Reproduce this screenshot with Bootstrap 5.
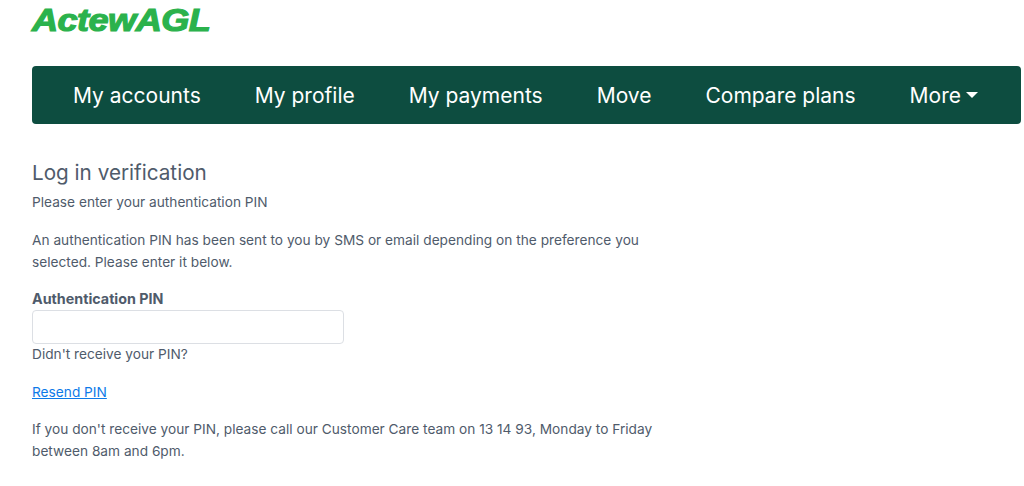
<!DOCTYPE html>
<html lang="en">

<head>
    <meta charset="UTF-8">
    <meta name="viewport" content="width=device-width, initial-scale=1.0">
    <title>ActewAGL</title>
    <link href="https://cdn.jsdelivr.net/npm/bootstrap@5.3.0/dist/css/bootstrap.min.css" rel="stylesheet">
    <style>
        body {
            font-family: Inter, "Noto Sans", sans-serif;
            color: #4f5b6b;
            font-size: 13.7px;
            line-height: 22px;
            background: #fff;
        }

        .page-wrap {
            padding: 0 3px 0 32px;
        }

        .brand-bar {
            height: 66px;
            padding-top: 1px;
        }

        .brand-logo {
            display: inline-block;
            font-family: "Liberation Sans", sans-serif;
            font-size: 32px;
            line-height: 38px;
            font-weight: 700;
            font-style: italic;
            color: #2bb24c;
            letter-spacing: -0.5px;
            -webkit-text-stroke: 1.2px #2bb24c;
            transform: scaleX(1.13);
            transform-origin: left top;
        }

        .main-nav {
            background: #0d4d40;
            height: 58px;
            padding: 0 0 0 14px;
            border-radius: 4px;
        }

        .main-nav .nav-link {
            color: #fff;
            font-size: 21px;
            line-height: 30px;
            padding: 15px 27px 13px;
        }

        .page-title {
            font-size: 20.7px;
            line-height: 28px;
            font-weight: 400;
            color: #4f5b6b;
            margin: 35px 0 4px;
        }

        .text-col {
            width: 640px;
        }

        .text-col p {
            margin-bottom: 16px;
        }

        .text-col p.tight-gap {
            margin-bottom: 15px;
        }

        .pin-label {
            font-size: 14.3px;
            font-weight: 700;
            margin-bottom: 0;
            display: block;
        }

        .pin-input {
            width: 312px;
            height: 34px;
            min-height: 34px;
            border: 1px solid #dcdfe4;
            border-radius: 4px;
        }

        .pin-help {
            margin-top: -1px;
        }

        .resend-link {
            color: #0d7ae8;
        }
    </style>
</head>

<body>
    <div class="page-wrap">
        <div class="brand-bar"><span class="brand-logo">ActewAGL</span></div>

        <ul class="nav main-nav align-items-center">
            <li class="nav-item"><a class="nav-link" href="#">My accounts</a></li>
            <li class="nav-item"><a class="nav-link" href="#">My profile</a></li>
            <li class="nav-item"><a class="nav-link" href="#">My payments</a></li>
            <li class="nav-item"><a class="nav-link" href="#">Move</a></li>
            <li class="nav-item"><a class="nav-link" href="#">Compare plans</a></li>
            <li class="nav-item"><a class="nav-link dropdown-toggle" href="#">More</a></li>
        </ul>

        <h1 class="page-title">Log in verification</h1>
        <div class="text-col">
            <p>Please enter your authentication PIN</p>
            <p class="tight-gap">An authentication PIN has been sent to you by SMS or email depending on the preference you selected. Please enter it below.</p>
            <label class="pin-label" for="pin">Authentication PIN</label>
            <input class="form-control pin-input" id="pin" type="text">
            <p class="pin-help">Didn't receive your PIN?</p>
            <p class="tight-gap"><a class="resend-link" href="#">Resend PIN</a></p>
            <p>If you don't receive your PIN, please call our Customer Care team on 13 14 93, Monday to Friday between 8am and 6pm.</p>
        </div>
    </div>
    <script src="https://cdn.jsdelivr.net/npm/bootstrap@5.3.0/dist/js/bootstrap.bundle.min.js"></script>
</body>

</html>
